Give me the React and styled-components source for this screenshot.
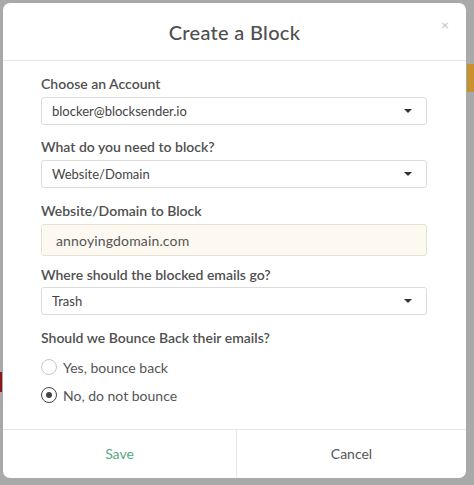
import React from "react";
import styled, { createGlobalStyle } from "styled-components";

const Global = createGlobalStyle`
  html, body { margin: 0; padding: 0; }
  body {
    background: #a9a9a9;
    font-family: "Lato", "Open Sans", sans-serif;
    width: 474px; height: 485px; overflow: hidden; position: relative;
  }
`;

const Backdrop = styled.div`
  position: relative;
  width: 474px;
  height: 485px;
  padding: 3px 0 0 3px;
  box-sizing: border-box;
`;

const Sliver = styled.div`
  position: absolute;
  left: ${p => p.$x}px;
  top: ${p => p.$y}px;
  width: ${p => p.$w}px;
  height: ${p => p.$h}px;
  background: ${p => p.$c};
`;

const Modal = styled.div`
  position: relative;
  width: 463px;
  height: 475px;
  background: #fff;
  border-radius: 7px;
  display: flex;
  flex-direction: column;
  overflow: hidden;
`;

const Header = styled.div`
  height: 57px;
  border-bottom: 1px solid #e6e6e6;
  display: flex;
  align-items: center;
  justify-content: center;
  position: relative;
`;

const Title = styled.h2`
  margin: 0;
  font-size: 20px;
  font-weight: 500;
  color: #4f4f4f;
  letter-spacing: 0.3px;
`;

const Close = styled.span`
  position: absolute;
  right: 17px;
  top: 13px;
  font-size: 14px;
  color: #c4c4c4;
`;

const Body = styled.div`
  flex: 1;
  padding: 15px 39px 0 38px;
  display: flex;
  flex-direction: column;
`;

const Field = styled.div`
  display: flex;
  flex-direction: column;
  margin-bottom: ${p => p.$mb ?? 14}px;
`;

const Label = styled.label`
  font-size: 14px;
  font-weight: 600;
  color: #505050;
  margin-bottom: ${p => p.$mb ?? 5}px;
  line-height: 16px;
`;

const SelectBox = styled.div`
  height: 26px;
  border: 1px solid #dcdcdc;
  border-radius: 3px;
  display: flex;
  align-items: center;
  justify-content: space-between;
  padding: 0 14px 0 10px;
  font-size: 13px;
  color: #444;
`;

const Caret = styled.span`
  width: 0;
  height: 0;
  border-left: 4px solid transparent;
  border-right: 4px solid transparent;
  border-top: 4px solid #333;
`;

const InputBox = styled.div`
  height: 30px;
  border: 1px solid #e6e1d6;
  border-radius: 3px;
  background: #fdf9f0;
  display: flex;
  align-items: center;
  padding: 0 14px;
  font-size: 14px;
  color: #555;
  letter-spacing: 0.15px;
`;

const RadioRow = styled.div`
  display: flex;
  align-items: center;
  gap: 6px;
  height: 28px;
  font-size: 14px;
  color: #555;
`;

const Radio = styled.span`
  width: 14px;
  height: 14px;
  border-radius: 50%;
  border: 1.5px solid ${p => (p.$on ? "#444" : "#c8c8c8")};
  display: flex;
  align-items: center;
  justify-content: center;
  &::after {
    content: "";
    width: 6px;
    height: 6px;
    border-radius: 50%;
    background: ${p => (p.$on ? "#444" : "transparent")};
  }
`;

const Footer = styled.div`
  height: 48px;
  border-top: 1px solid #e6e6e6;
  display: flex;
`;

const FooterButton = styled.button`
  flex: ${p => (p.$first ? "0 0 234px" : "1")};
  border: none;
  background: none;
  font-family: inherit;
  font-size: 14px;
  padding: 0 0 2px 0;
  color: ${p => (p.$green ? "#58a787" : "#555")};
  border-right: ${p => (p.$first ? "1px solid #e6e6e6" : "none")};
  cursor: pointer;
`;

const Select = ({ value }) => (
  <SelectBox>
    <span>{value}</span>
    <Caret />
  </SelectBox>
);

export default function App() {
  return (
    <>
      <Global />
      <Backdrop>
        <Sliver $x={467} $y={64} $w={7} $h={28} $c="#c8922f" />
        <Sliver $x={0} $y={372} $w={2} $h={20} $c="#8a1a1a" />
        <Modal>
          <Header>
            <Title>Create a Block</Title>
            <Close>×</Close>
          </Header>
          <Body>
            <Field>
              <Label>Choose an Account</Label>
              <Select value="blocker@blocksender.io" />
            </Field>
            <Field $mb={15}>
              <Label>What do you need to block?</Label>
              <Select value="Website/Domain" />
            </Field>
            <Field $mb={11}>
              <Label>Website/Domain to Block</Label>
              <InputBox>annoyingdomain.com</InputBox>
            </Field>
            <Field $mb={15}>
              <Label $mb={4}>Where should the blocked emails go?</Label>
              <Select value="Trash" />
            </Field>
            <Field>
              <Label $mb={7}>Should we Bounce Back their emails?</Label>
              <RadioRow>
                <Radio />
                Yes, bounce back
              </RadioRow>
              <RadioRow>
                <Radio $on />
                No, do not bounce
              </RadioRow>
            </Field>
          </Body>
          <Footer>
            <FooterButton $first $green>Save</FooterButton>
            <FooterButton>Cancel</FooterButton>
          </Footer>
        </Modal>
      </Backdrop>
    </>
  );
}
